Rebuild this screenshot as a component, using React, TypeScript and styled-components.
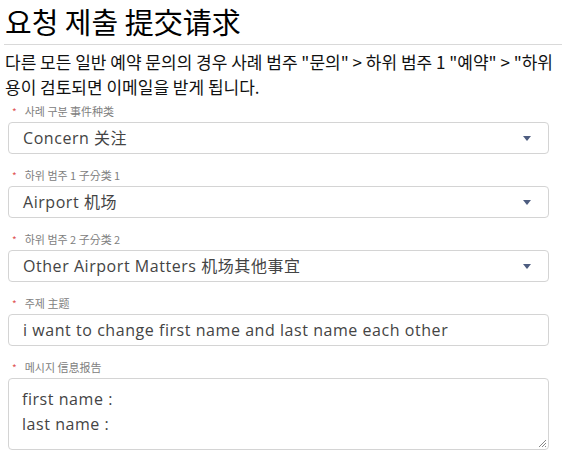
import React from "react";
import styled, { createGlobalStyle } from "styled-components";

const Global = createGlobalStyle`
  html, body { margin: 0; padding: 0; background: #fff; }
  body { font-family: "Noto Sans CJK KR", "Noto Sans", sans-serif; }
  * { box-sizing: border-box; }
`;

const Page = styled.div`
  width: 562px;
  height: 458px;
  overflow: hidden;
  padding: 0 0 0 4px;
`;

const Title = styled.h1`
  margin: 0;
  padding: 3px 0 0 1px;
  height: 44px;
  font-size: 29px;
  font-weight: 400;
  line-height: 36px;
  color: #000;
  font-family: "Noto Sans CJK KR", sans-serif;
`;

const Rule = styled.hr`
  margin: 0;
  border: 0;
  border-top: 1px solid #d9d9d9;
`;

const Intro = styled.p`
  margin: 4px 0 0 1px;
  font-size: 17px;
  line-height: 25px;
  color: #111;
  white-space: nowrap;
  overflow: hidden;
  font-family: "Noto Sans CJK KR", sans-serif;
`;

const Form = styled.div`
  display: flex;
  flex-direction: column;
  padding: 1px 0 0 4px;
  width: 545px;
`;

const Field = styled.div`
  display: flex;
  flex-direction: column;
  margin-bottom: 10px;
`;

const Label = styled.label`
  display: flex;
  align-items: center;
  gap: 8px;
  height: 22px;
  padding-left: 4px;
  font-size: 11px;
  color: #808080;
  font-family: "Noto Sans CJK KR", sans-serif;
`;

const Star = styled.span`
  color: #e05555;
  font-size: 10px;
`;

const Box = styled.div<{ $tall?: boolean }>`
  position: relative;
  display: flex;
  align-items: ${(p) => (p.$tall ? "flex-start" : "center")};
  height: ${(p) => (p.$tall ? "72px" : "32px")};
  border: 1px solid #d4d4d4;
  border-radius: 4px;
  padding: ${(p) => (p.$tall ? "8px 13px" : "0 14px")};
  font-family: "Open Sans", "Noto Sans CJK SC", sans-serif;
  font-size: 16px;
  letter-spacing: 0.55px;
  line-height: 25px;
  color: #444;
`;

const Value = styled.div`
  flex: 1;
  white-space: pre;
`;

const Caret = styled.svg`
  width: 8px;
  height: 5px;
  margin-right: 3px;
`;

const Grip = styled.svg`
  position: absolute;
  right: 1px;
  bottom: 1px;
  width: 9px;
  height: 9px;
`;

const Arrow = () => (
  <Caret viewBox="0 0 8 5">
    <path d="M0 0 H8 L4 5 Z" fill="#4e5d80" />
  </Caret>
);

const selects = [
  { label: "사례 구분 事件种类", value: "Concern 关注" },
  { label: "하위 범주 1 子分类 1", value: "Airport 机场" },
  { label: "하위 범주 2 子分类 2", value: "Other Airport Matters 机场其他事宜" },
];

export default function App() {
  return (
    <Page>
      <Global />
      <Title>요청 제출 提交请求</Title>
      <Rule />
      <Intro>
        다른 모든 일반 예약 문의의 경우 사례 범주 "문의" &gt; 하위 범주 1 "예약" &gt; "하위
        <br />
        용이 검토되면 이메일을 받게 됩니다.
      </Intro>
      <Form>
        {selects.map((s) => (
          <Field key={s.label}>
            <Label>
              <Star>*</Star>
              {s.label}
            </Label>
            <Box>
              <Value>{s.value}</Value>
              <Arrow />
            </Box>
          </Field>
        ))}
        <Field>
          <Label>
            <Star>*</Star>
            주제 主题
          </Label>
          <Box>
            <Value>i want to change first name and last name each other</Value>
          </Box>
        </Field>
        <Field>
          <Label>
            <Star>*</Star>
            메시지 信息报告
          </Label>
          <Box $tall>
            <Value>{"first name :\nlast name :"}</Value>
            <Grip viewBox="0 0 9 9">
              <path d="M8 1 L1 8 M8 4 L4 8 M8 7 L7 8" stroke="#888" strokeWidth="1" />
            </Grip>
          </Box>
        </Field>
      </Form>
    </Page>
  );
}
